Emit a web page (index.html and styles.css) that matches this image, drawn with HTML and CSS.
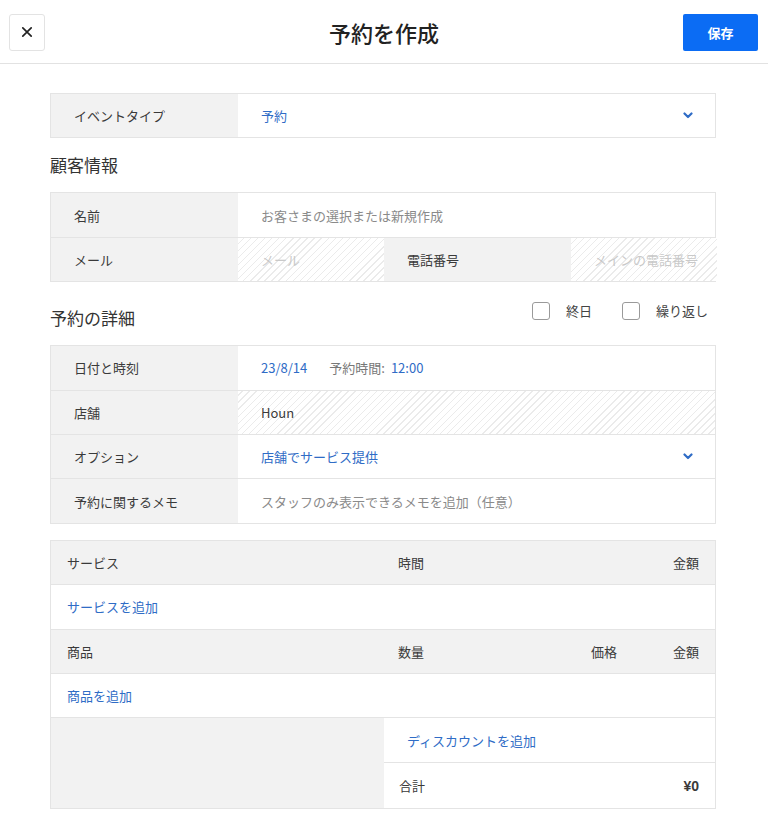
FILE: index.html
```html
<!DOCTYPE html>
<html lang="ja">
<head>
    <meta charset="UTF-8">
    <meta name="viewport" content="width=device-width, initial-scale=1.0">
    <title>予約を作成</title>
    <link rel="stylesheet" href="styles.css">
</head>
<body>
    <header class="top-bar">
        <button class="close-btn" aria-label="閉じる">
            <svg width="12" height="12" viewBox="0 0 12 12"><path d="M1.8 1.8 L10.2 10.2 M10.2 1.8 L1.8 10.2" stroke="#222" stroke-width="1.7" stroke-linecap="round"/></svg>
        </button>
        <h1 class="page-title">予約を作成</h1>
        <button class="save-btn">保存</button>
    </header>

    <main class="content">
        <div class="table">
            <div class="row">
                <div class="label">イベントタイプ</div>
                <div class="value link select">
                    <span>予約</span>
                    <svg class="chevron" width="10" height="7" viewBox="0 0 10 7"><path d="M1.5 1.5 L5 5 L8.5 1.5" fill="none" stroke="#2f6cc6" stroke-width="2.2" stroke-linecap="round" stroke-linejoin="round"/></svg>
                </div>
            </div>
        </div>

        <div class="section-head">
            <h2 class="section-title">顧客情報</h2>
        </div>
        <div class="table">
            <div class="row">
                <div class="label">名前</div>
                <div class="value placeholder">お客さまの選択または新規作成</div>
            </div>
            <div class="row">
                <div class="label">メール</div>
                <div class="value hatch faint half">メール</div>
                <div class="label">電話番号</div>
                <div class="value hatch faint half">メインの電話番号</div>
            </div>
        </div>

        <div class="section-head second">
            <h2 class="section-title">予約の詳細</h2>
            <div class="checks">
                <label class="check"><span class="box"></span>終日</label>
                <label class="check"><span class="box"></span>繰り返し</label>
            </div>
        </div>
        <div class="table">
            <div class="row">
                <div class="label">日付と時刻</div>
                <div class="value">
                    <span class="link">23/8/14</span>
                    <span class="time-label">予約時間:</span>
                    <span class="link">12:00</span>
                </div>
            </div>
            <div class="row">
                <div class="label">店舗</div>
                <div class="value hatch">Houn</div>
            </div>
            <div class="row">
                <div class="label">オプション</div>
                <div class="value link select">
                    <span>店舗でサービス提供</span>
                    <svg class="chevron" width="10" height="7" viewBox="0 0 10 7"><path d="M1.5 1.5 L5 5 L8.5 1.5" fill="none" stroke="#2f6cc6" stroke-width="2.2" stroke-linecap="round" stroke-linejoin="round"/></svg>
                </div>
            </div>
            <div class="row">
                <div class="label">予約に関するメモ</div>
                <div class="value placeholder">スタッフのみ表示できるメモを追加（任意）</div>
            </div>
        </div>

        <div class="table items">
            <div class="row head">
                <div class="col-name">サービス</div>
                <div class="col-mid">時間</div>
                <div class="col-price"></div>
                <div class="col-amount">金額</div>
            </div>
            <div class="row">
                <div class="col-name link">サービスを追加</div>
            </div>
            <div class="row head">
                <div class="col-name">商品</div>
                <div class="col-mid">数量</div>
                <div class="col-price">価格</div>
                <div class="col-amount">金額</div>
            </div>
            <div class="row">
                <div class="col-name link">商品を追加</div>
            </div>
            <div class="summary">
                <div class="summary-blank"></div>
                <div class="summary-lines">
                    <div class="summary-line link discount">ディスカウントを追加</div>
                    <div class="summary-line total">
                        <span class="total-label">合計</span>
                        <span class="total-value">¥0</span>
                    </div>
                </div>
            </div>
        </div>
    </main>
</body>
</html>
```

FILE: styles.css
```css
body {
    margin: 0;
    padding: 0;
    background: #fff;
    color: #3a3a3a;
    font-family: "Noto Sans CJK JP", "Noto Sans", sans-serif;
    font-size: 13px;
}

.top-bar {
    height: 64px;
    border-bottom: 1px solid #e2e2e2;
    display: grid;
    grid-template-columns: 1fr auto 1fr;
    align-items: center;
    padding: 0 10px 0 9px;
    box-sizing: border-box;
}

.close-btn {
    width: 36px;
    height: 37px;
    border: 1px solid #e3e3e3;
    border-radius: 3px;
    background: #fff;
    display: flex;
    align-items: center;
    justify-content: center;
    padding: 0;
    margin-top: 1px;
}

.page-title {
    margin: 0;
    font-size: 22px;
    font-weight: 500;
    color: #222;
    padding-left: 1px;
}

.save-btn {
    justify-self: end;
    width: 75px;
    height: 37px;
    border: none;
    border-radius: 2px;
    background: #0b6cf4;
    color: #fff;
    font-family: inherit;
    font-size: 13px;
    font-weight: 700;
    margin-top: 1px;
}

.content {
    width: 666px;
    margin: 29px 0 0 50px;
}

.table {
    border: 1px solid #e4e4e4;
}

.row {
    display: flex;
    height: 43.4px;
    align-items: stretch;
}

.row + .row,
.row + .summary {
    border-top: 1px solid #e4e4e4;
}

.label {
    width: 187px;
    flex: none;
    background: #f2f2f2;
    display: flex;
    align-items: center;
    padding-left: 23px;
    box-sizing: border-box;
}

.value {
    flex: 1;
    display: flex;
    align-items: center;
    padding: 0 22px 0 23px;
    min-width: 0;
}

.value.half {
    flex: none;
    width: 146px;
    box-sizing: border-box;
}

.link {
    color: #2f6cc6;
}

.select {
    justify-content: space-between;
}

.placeholder {
    color: #8a8a8a;
}

.faint {
    color: #c9c9c9;
    white-space: nowrap;
}

.hatch {
    background: repeating-linear-gradient(-45deg, #fff 0, #fff 4px, #ebebeb 4px, #ebebeb 5px);
}

.time-label {
    color: #777;
    margin: 0 6px 0 22px;
}

.section-head {
    display: flex;
    justify-content: space-between;
    align-items: flex-start;
    margin: 15px 0;
}

.section-head.second {
    margin-top: 20px;
}

.section-title {
    margin: 0;
    font-size: 17px;
    font-weight: 400;
    line-height: 24px;
    color: #333;
}

.second .section-title {
    padding-top: 4px;
}

.checks {
    display: flex;
    margin-right: 8px;
}

.check {
    display: flex;
    align-items: center;
    color: #444;
    line-height: 18px;
}

.check + .check {
    margin-left: 30px;
}

.box {
    width: 16px;
    height: 16px;
    border: 1px solid #9a9a9a;
    border-radius: 3px;
    margin-right: 16px;
}

.items {
    margin-top: 16px;
}

.items .row {
    align-items: center;
    padding: 0 16px;
}

.items .row.head {
    background: #f2f2f2;
}

.col-name {
    width: 331px;
}

.col-mid {
    flex: 1;
}

.col-price {
    width: 80px;
}

.col-amount {
    width: 28px;
    text-align: right;
}

.summary {
    display: flex;
}

.summary-blank {
    width: 333px;
    background: #f2f2f2;
}

.summary-lines {
    flex: 1;
}

.summary-line {
    height: 44px;
    display: flex;
    align-items: center;
}

.summary-line.discount {
    padding-left: 23px;
}

.summary-line.total {
    border-top: 1px solid #e4e4e4;
    justify-content: space-between;
    padding: 0 16px 0 15px;
    height: 45px;
}

.total-value {
    font-weight: 700;
    font-family: "Liberation Sans", "Noto Sans CJK JP", sans-serif;
    font-size: 14px;
}
```
